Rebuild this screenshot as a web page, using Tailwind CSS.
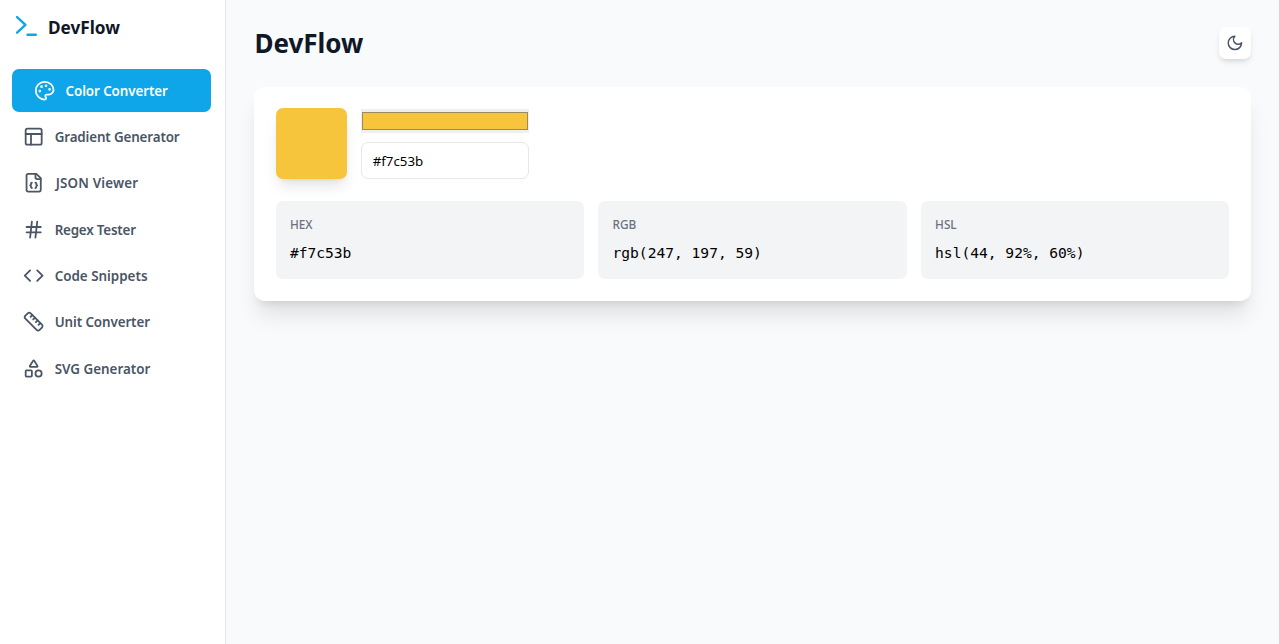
<!DOCTYPE html>
<html lang="en">
<head>
<meta charset="utf-8">
<title>DevFlow</title>
<script src="https://cdn.jsdelivr.net/npm/@tailwindcss/browser@4"></script>
</head>
<body class="flex h-screen overflow-hidden bg-gray-50 font-['Noto_Sans',sans-serif] text-gray-900">
<aside class="flex w-[226px] shrink-0 flex-col border-r border-gray-200 bg-white">
  <div class="flex h-[56px] items-center gap-2 pl-[15px]">
    <svg class="mb-[2px] size-[25px]" viewBox="0 0 24 24" fill="none" stroke="#0ea5e9" stroke-width="2.3" stroke-linecap="round" stroke-linejoin="round"><path d="m2 17 8-7.500-8-7.500M12 19h8"/></svg>
    <span class="text-[17.2px] font-bold">DevFlow</span>
  </div>
  <nav class="mt-[13.2px] flex flex-col gap-[3.65px] pl-3 pr-[14px] text-[13.4px] font-semibold text-gray-600 [&_svg]:size-[21.33px] [&_svg]:shrink-0">
    <a class="flex h-[42.67px] items-center gap-[10.67px] rounded-[7px] bg-[#0ea5e9] pl-[21.5px] text-white"><svg viewBox="0 0 24 24" fill="none" stroke="currentColor" stroke-width="2" stroke-linecap="round" stroke-linejoin="round"><circle cx="13.5" cy="6.5" r=".5" fill="currentColor"/><circle cx="17.5" cy="10.5" r=".5" fill="currentColor"/><circle cx="8.5" cy="7.5" r=".5" fill="currentColor"/><circle cx="6.5" cy="12.500" r=".5" fill="currentColor"/><path d="M12 2C6.500 2 2 6.500 2 12s4.500 10 10 10c.926 0 1.648-.746 1.648-1.688 0-.437-.18-.835-.437-1.125-.29-.289-.438-.652-.438-1.125a1.640 1.640 0 0 1 1.668-1.668h1.996c3.051 0 5.555-2.503 5.555-5.554C21.965 6.012 17.461 2 12 2z"/></svg><span class="pt-px tracking-[-0.08px]">Color Converter</span></a>
    <a class="flex h-[42.67px] items-center gap-[10.67px] pl-[10.67px]"><svg viewBox="0 0 24 24" fill="none" stroke="currentColor" stroke-width="2" stroke-linecap="round" stroke-linejoin="round"><rect x="3" y="3" width="18" height="18" rx="2"/><path d="M3 9h18M9 21V9"/></svg><span class="pt-px tracking-[-0.14px]">Gradient Generator</span></a>
    <a class="flex h-[42.67px] items-center gap-[10.67px] pl-[10.67px]"><svg viewBox="0 0 24 24" fill="none" stroke="currentColor" stroke-width="2" stroke-linecap="round" stroke-linejoin="round"><path d="M15 2H6a2 2 0 0 0-2 2v16a2 2 0 0 0 2 2h12a2 2 0 0 0 2-2V7Z"/><path d="M14 2v4a2 2 0 0 0 2 2h4M10 12a1 1 0 0 0-1 1v1a1 1 0 0 1-1 1 1 1 0 0 1 1 1v1a1 1 0 0 0 1 1M14 18a1 1 0 0 0 1-1v-1a1 1 0 0 1 1-1 1 1 0 0 1-1-1v-1a1 1 0 0 0-1-1"/></svg><span class="pl-px tracking-[0.18px]">JSON Viewer</span></a>
    <a class="flex h-[42.67px] items-center gap-[10.67px] pl-[10.67px]"><svg viewBox="0 0 24 24" fill="none" stroke="currentColor" stroke-width="2" stroke-linecap="round" stroke-linejoin="round"><path d="M4 9h16M4 15h16M10 3 8 21M16 3l-2 18"/></svg><span class="pt-px tracking-[-0.2px]">Regex Tester</span></a>
    <a class="flex h-[42.67px] items-center gap-[10.67px] pl-[10.67px]"><svg viewBox="0 0 24 24" fill="none" stroke="currentColor" stroke-width="2" stroke-linecap="round" stroke-linejoin="round"><path d="m16 18 6-6-6-6M8 6l-6 6 6 6"/></svg><span class="pt-px">Code Snippets</span></a>
    <a class="flex h-[42.67px] items-center gap-[10.67px] pl-[10.67px]"><svg viewBox="0 0 24 24" fill="none" stroke="currentColor" stroke-width="2" stroke-linecap="round" stroke-linejoin="round"><path d="M21.300 15.300a2.400 2.400 0 0 1 0 3.400l-2.600 2.600a2.400 2.400 0 0 1-3.400 0L2.700 8.700a2.410 2.410 0 0 1 0-3.400l2.600-2.600a2.410 2.410 0 0 1 3.400 0Z"/><path d="m14.500 12.500 2-2M11.500 9.500l2-2M8.500 6.500l2-2M17.500 15.500l2-2"/></svg><span class="pt-px tracking-[-0.1px]">Unit Converter</span></a>
    <a class="flex h-[42.67px] items-center gap-[10.67px] pl-[10.67px]"><svg viewBox="0 0 24 24" fill="none" stroke="currentColor" stroke-width="2" stroke-linecap="round" stroke-linejoin="round"><path d="M8.300 10a.7.7 0 0 1-.626-1.079L11.400 3a.7.7 0 0 1 1.198-.043L16.300 8.900a.7.7 0 0 1-.572 1.100Z"/><rect x="3" y="14" width="7" height="7" rx="1"/><circle cx="17.500" cy="17.500" r="3.500"/></svg><span class="pt-px">SVG Generator</span></a>
  </nav>
</aside>
<main class="min-w-0 flex-1 px-[28.4px] pt-[27px]">
  <header class="flex h-8 items-center justify-between">
    <h1 class="text-[26px] font-bold">DevFlow</h1>
    <button class="flex size-8 items-center justify-center rounded-[7px] bg-white text-gray-600 shadow-md"><svg class="size-[17.8px]" viewBox="0 0 24 24" fill="none" stroke="currentColor" stroke-width="2" stroke-linecap="round" stroke-linejoin="round"><path d="M12 3a6 6 0 0 0 9 9 9 9 0 1 1-9-9Z"/></svg></button>
  </header>
  <section class="mt-[28px] h-[213.5px] rounded-[10.67px] bg-white p-[21.33px] shadow-[0_18px_22px_-4px_rgba(0,0,0,0.1),0_7px_9px_-5px_rgba(0,0,0,0.1)]">
    <div class="flex gap-[14.2px]">
      <div class="size-[71.1px] rounded-[7px] bg-[#f7c53b] shadow-lg"></div>
      <div class="flex w-[167.5px] flex-col justify-between pt-[1px]">
        <div class="h-6 bg-[#efefef] px-px py-[3px]"><div class="h-full border border-[#9b8b5c] bg-[#f7c53b]"></div></div>
        <input class="h-[37.5px] w-full rounded-[7px] border border-gray-200 px-[10.67px] text-[13.3px] text-black" value="#f7c53b">
      </div>
    </div>
    <div class="mt-[21.33px] grid grid-cols-3 gap-[14.2px]">
      <div class="h-[78px] rounded-[7px] bg-gray-100 px-[14.2px] pt-[14.2px]"><div class="text-[11.8px] leading-[18px] font-medium text-gray-500">HEX</div><div class="mt-[8px] font-['DejaVu_Sans_Mono',monospace] text-[14.6px] leading-[24px] text-black">#f7c53b</div></div>
      <div class="h-[78px] rounded-[7px] bg-gray-100 px-[14.2px] pt-[14.2px]"><div class="text-[11.8px] leading-[18px] font-medium text-gray-500">RGB</div><div class="mt-[8px] font-['DejaVu_Sans_Mono',monospace] text-[14.6px] leading-[24px] text-black">rgb(247, 197, 59)</div></div>
      <div class="h-[78px] rounded-[7px] bg-gray-100 px-[14.2px] pt-[14.2px]"><div class="text-[11.8px] leading-[18px] font-medium text-gray-500">HSL</div><div class="mt-[8px] font-['DejaVu_Sans_Mono',monospace] text-[14.6px] leading-[24px] text-black">hsl(44, 92%, 60%)</div></div>
    </div>
  </section>
</main>
</body>
</html>
